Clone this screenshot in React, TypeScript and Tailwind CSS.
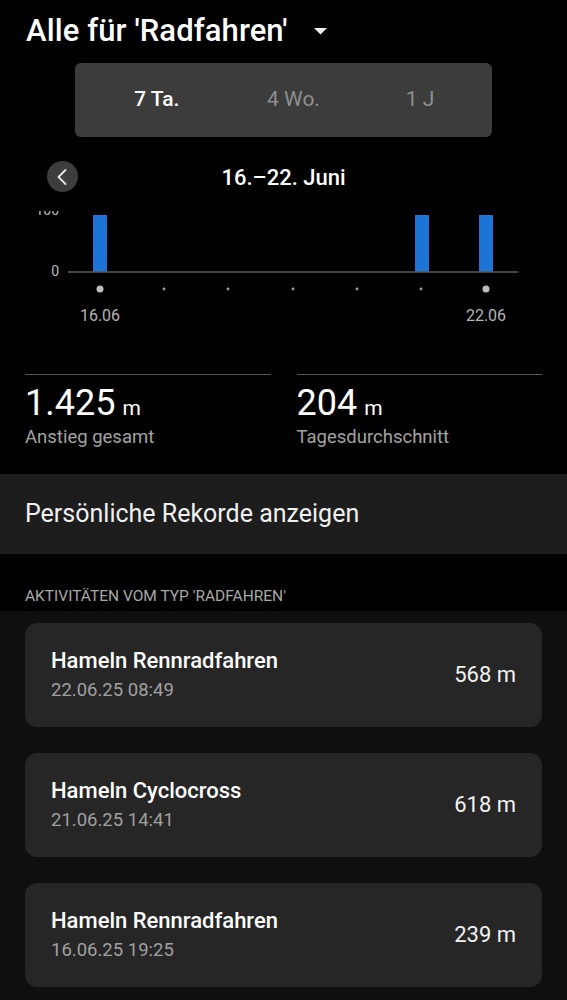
import { ChevronLeft } from "lucide-react";

const activities = [
  { title: "Hameln Rennradfahren", date: "22.06.25 08:49", value: "568 m" },
  { title: "Hameln Cyclocross", date: "21.06.25 14:41", value: "618 m" },
  { title: "Hameln Rennradfahren", date: "16.06.25 19:25", value: "239 m" },
];

// x centers of the 7 day columns
const days = [100, 164, 228, 293, 357, 421, 486];

const Chart = () => {
  return (
    <svg width="567" height="120" viewBox="0 0 567 120" className="block" style={{ fontFamily: "Roboto, sans-serif" }}>
      <text x="59" y="4" textAnchor="end" fontSize="14" fill="#bdbdbd">100</text>
      <rect x="93" y="4" width="14" height="57" fill="#1b74d6" />
      <rect x="415" y="4" width="14" height="57" fill="#1b74d6" />
      <rect x="479" y="4" width="14" height="57" fill="#1b74d6" />
      <line x1="68" y1="61" x2="518" y2="61" stroke="#595959" strokeWidth="1.5" />
      <text x="59" y="65" textAnchor="end" fontSize="14" fill="#bdbdbd">0</text>
      {days.map((x, i) =>
        i === 0 || i === 6 ? (
          <circle key={i} cx={x} cy="78" r="3.5" fill="#bdbdbd" />
        ) : (
          <circle key={i} cx={x} cy="78" r="1.4" fill="#9e9e9e" />
        )
      )}
      <text x="100" y="109.5" textAnchor="middle" fontSize="16" fill="#b5b5b5">16.06</text>
      <text x="486" y="109.5" textAnchor="middle" fontSize="16" fill="#b5b5b5">22.06</text>
    </svg>
  );
};

const Stat = ({ value, label }: { value: string; label: string }) => (
  <div className="border-t border-[#565656]">
    <div className="pt-[8px] flex items-baseline">
      <span className="text-[36px] leading-[40px] text-white">{value}</span>
      <span className="ml-[7px] text-[21px] text-white">m</span>
    </div>
    <div className="text-[18.5px] leading-[24px] text-[#a3a3a3]">{label}</div>
  </div>
);

export default function App() {
  return (
    <div className="w-[567px] h-[1000px] overflow-hidden bg-black" style={{ fontFamily: "Roboto, 'Noto Sans', sans-serif" }}>
      {/* header */}
      <div className="pt-[11px] pl-[26px] flex items-center h-[51px]">
        <h1 className="text-[31px] leading-[40px] font-medium text-white tracking-[0.1px]">Alle für 'Radfahren'</h1>
        <svg width="13" height="7" viewBox="0 0 13 7" className="ml-[26px] mt-[1px]">
          <path d="M0 0 L13 0 L6.5 6.5 Z" fill="#f2f2f2" />
        </svg>
      </div>

      {/* range switch */}
      <div className="mt-[12px] mx-[75px] w-[417px] h-[74px] rounded-[6px] bg-[#3c3c3c] grid grid-cols-3 pl-[16px] pr-[6px] items-center text-[21px]">
        <div className="text-center font-medium text-white">7 Ta.</div>
        <div className="text-center text-[#8f8f8f] pl-[10px]">4 Wo.</div>
        <div className="text-center text-[#8f8f8f]">1 J</div>
      </div>

      {/* week navigation */}
      <div className="mt-[24px] h-[32px] relative flex items-center justify-center">
        <div className="absolute left-[47px] top-0 w-[31px] h-[31px] rounded-full bg-[#3d3d3d] flex items-center justify-center">
          <ChevronLeft size={28} strokeWidth={1.6} className="text-[#e6e6e6] -ml-[1px]" />
        </div>
        <div className="text-[22px] font-medium text-white">16.–22. Juni</div>
      </div>

      <div className="mt-[18px]">
        <Chart />
      </div>

      {/* totals */}
      <div className="mt-[43px] px-[25px] grid grid-cols-2 gap-[26px]">
        <Stat value="1.425" label="Anstieg gesamt" />
        <Stat value="204" label="Tagesdurchschnitt" />
      </div>

      <div className="mt-[25px] h-[80px] bg-[#1d1d1d] flex items-center px-[25px]">
        <span className="text-[25px] text-[#f0f0f0]">Persönliche Rekorde anzeigen</span>
      </div>

      <div className="mt-[32px] px-[25px] text-[15.5px] leading-[20px] text-[#a8a8a8]">AKTIVITÄTEN VOM TYP 'RADFAHREN'</div>

      {/* activity list */}
      <div className="mt-[5px] bg-[#0f0f0f] pt-[12px] px-[25px] pb-[20px] flex flex-col gap-[26px]">
        {activities.map((a, i) => (
          <div key={i} className="h-[104px] rounded-[12px] bg-[#262626] flex items-center justify-between pl-[26px] pr-[26px]">
            <div>
              <div className="text-[22px] leading-[28px] font-medium text-white">{a.title}</div>
              <div className="text-[18.5px] leading-[26px] mt-[2px] text-[#a0a0a0]">{a.date}</div>
            </div>
            <div className="text-[22px] text-[#f2f2f2]">{a.value}</div>
          </div>
        ))}
      </div>
    </div>
  );
}
